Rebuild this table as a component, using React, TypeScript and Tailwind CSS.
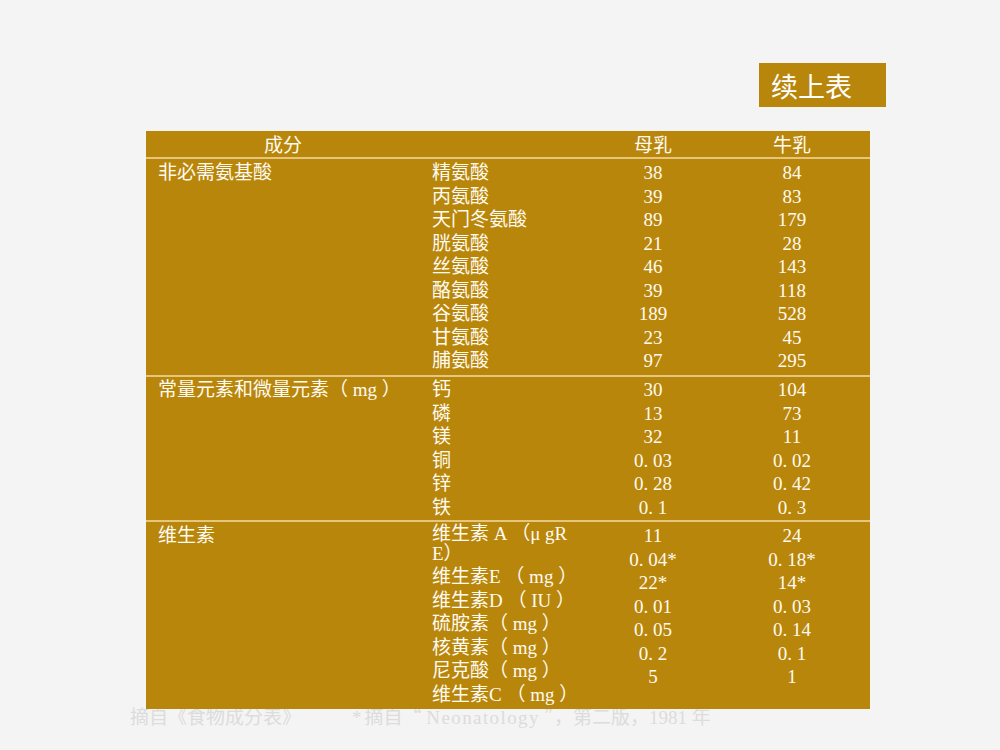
import React from "react";

const F = { fontFamily: '"Liberation Serif", "Noto Sans CJK SC", serif' };
const CJK = { fontFamily: '"Noto Sans CJK SC", sans-serif' };

const amino = [
  ["精氨酸", "38", "84"],
  ["丙氨酸", "39", "83"],
  ["天门冬氨酸", "89", "179"],
  ["胱氨酸", "21", "28"],
  ["丝氨酸", "46", "143"],
  ["酪氨酸", "39", "118"],
  ["谷氨酸", "189", "528"],
  ["甘氨酸", "23", "45"],
  ["脯氨酸", "97", "295"],
];
const minerals = [
  ["钙", "30", "104"],
  ["磷", "13", "73"],
  ["镁", "32", "11"],
  ["铜", "0.03", "0.02"],
  ["锌", "0.28", "0.42"],
  ["铁", "0.1", "0.3"],
];
const vitLabels = [
  "维生素E （ mg ）",
  "维生素D （ IU ）",
  "硫胺素（ mg ）",
  "核黄素（ mg ）",
  "尼克酸（ mg ）",
  "维生素C （ mg ）",
];
const vitA = ["11", "0.04*", "22*", "0.01", "0.05", "0.2", "5"];
const vitB = ["24", "0.18*", "14*", "0.03", "0.14", "0.1", "1"];

function Num({ v }: { v: string }) {
  const parts = v.split(".");
  if (parts.length === 1) return <>{v}</>;
  return (
    <>
      {parts[0]}
      <span className="inline-block w-[9.5px] text-left">.</span>
      {parts[1]}
    </>
  );
}

function Group({
  title,
  labels,
  a,
  b,
  extra,
  cls,
}: {
  title: string;
  labels: string[];
  a: string[];
  b: string[];
  extra?: React.ReactNode;
  cls: string;
}) {
  return (
    <div className={`flex text-[19px] leading-[23.5px] text-[#fffaf0] ${cls}`}>
      <div className="w-[274px] pl-[12px] whitespace-nowrap">{title}</div>
      <div className="w-[170px] pl-[12px] whitespace-pre">
        {extra}
        {labels.map((l, i) => (
          <div key={i}>{l}</div>
        ))}
      </div>
      <div className="w-[126px] text-center">
        {a.map((v, i) => (
          <div key={i}>
            <Num v={v} />
          </div>
        ))}
      </div>
      <div className="w-[154px] text-center pr-[2px]">
        {b.map((v, i) => (
          <div key={i}>
            <Num v={v} />
          </div>
        ))}
      </div>
    </div>
  );
}

export default function App() {
  return (
    <div className="w-[1000px] h-[750px] bg-[#f4f4f4] overflow-hidden" style={F}>
      <div className="pt-[63px] pl-[759px]">
        <div
          className="w-[127px] h-[44px] bg-[#b8860b] text-white text-[27px] leading-[43px] pl-[12px] pt-[1px]"
          style={CJK}
        >
          续上表
        </div>
      </div>
      <div className="relative z-10 mt-[24px] ml-[146px] w-[724px] bg-[#b8860b]">
        <div className="flex h-[28px] pt-[3px] text-[19px] leading-[23px] text-[#fffaf0] border-b-2 border-[#e6c57c]">
          <div className="w-[274px] text-center">成分</div>
          <div className="w-[170px]"></div>
          <div className="w-[126px] text-center">母乳</div>
          <div className="w-[154px] text-center pr-[2px]">牛乳</div>
        </div>
        <Group
          title="非必需氨基酸"
          labels={amino.map((r) => r[0])}
          a={amino.map((r) => r[1])}
          b={amino.map((r) => r[2])}
          cls="pt-[2px] pb-[2.5px] border-b-2 border-[#e6c57c]"
        />
        <Group
          title="常量元素和微量元素（ mg ）"
          labels={minerals.map((r) => r[0])}
          a={minerals.map((r) => r[1])}
          b={minerals.map((r) => r[2])}
          cls="pt-[1px] pb-[1px] border-b-2 border-[#e6c57c]"
        />
        <Group
          title="维生素"
          labels={vitLabels}
          a={vitA}
          b={vitB}
          extra={
            <div className="leading-[20px] mb-[1px]">
              <div>维生素 A （μ gR</div>
              <div>E）</div>
            </div>
          }
          cls="pt-[2px] pb-[3px]"
        />
      </div>
      <div className="relative mt-[-5px] pl-[130px] text-[19px] leading-[24px] text-[#dcdcdc] whitespace-pre">
        <span>摘自《食物成分表》</span>
        <span className="ml-[51px]">*</span>
        <span className="ml-[3px]">摘自</span>
        <span style={CJK}>“</span>
        <span> </span>
        <span className="tracking-[1.4px]">Neonatology</span>
        <span> </span>
        <span style={CJK}>”，</span>
        <span>第二版，1981 年</span>
      </div>
    </div>
  );
}
